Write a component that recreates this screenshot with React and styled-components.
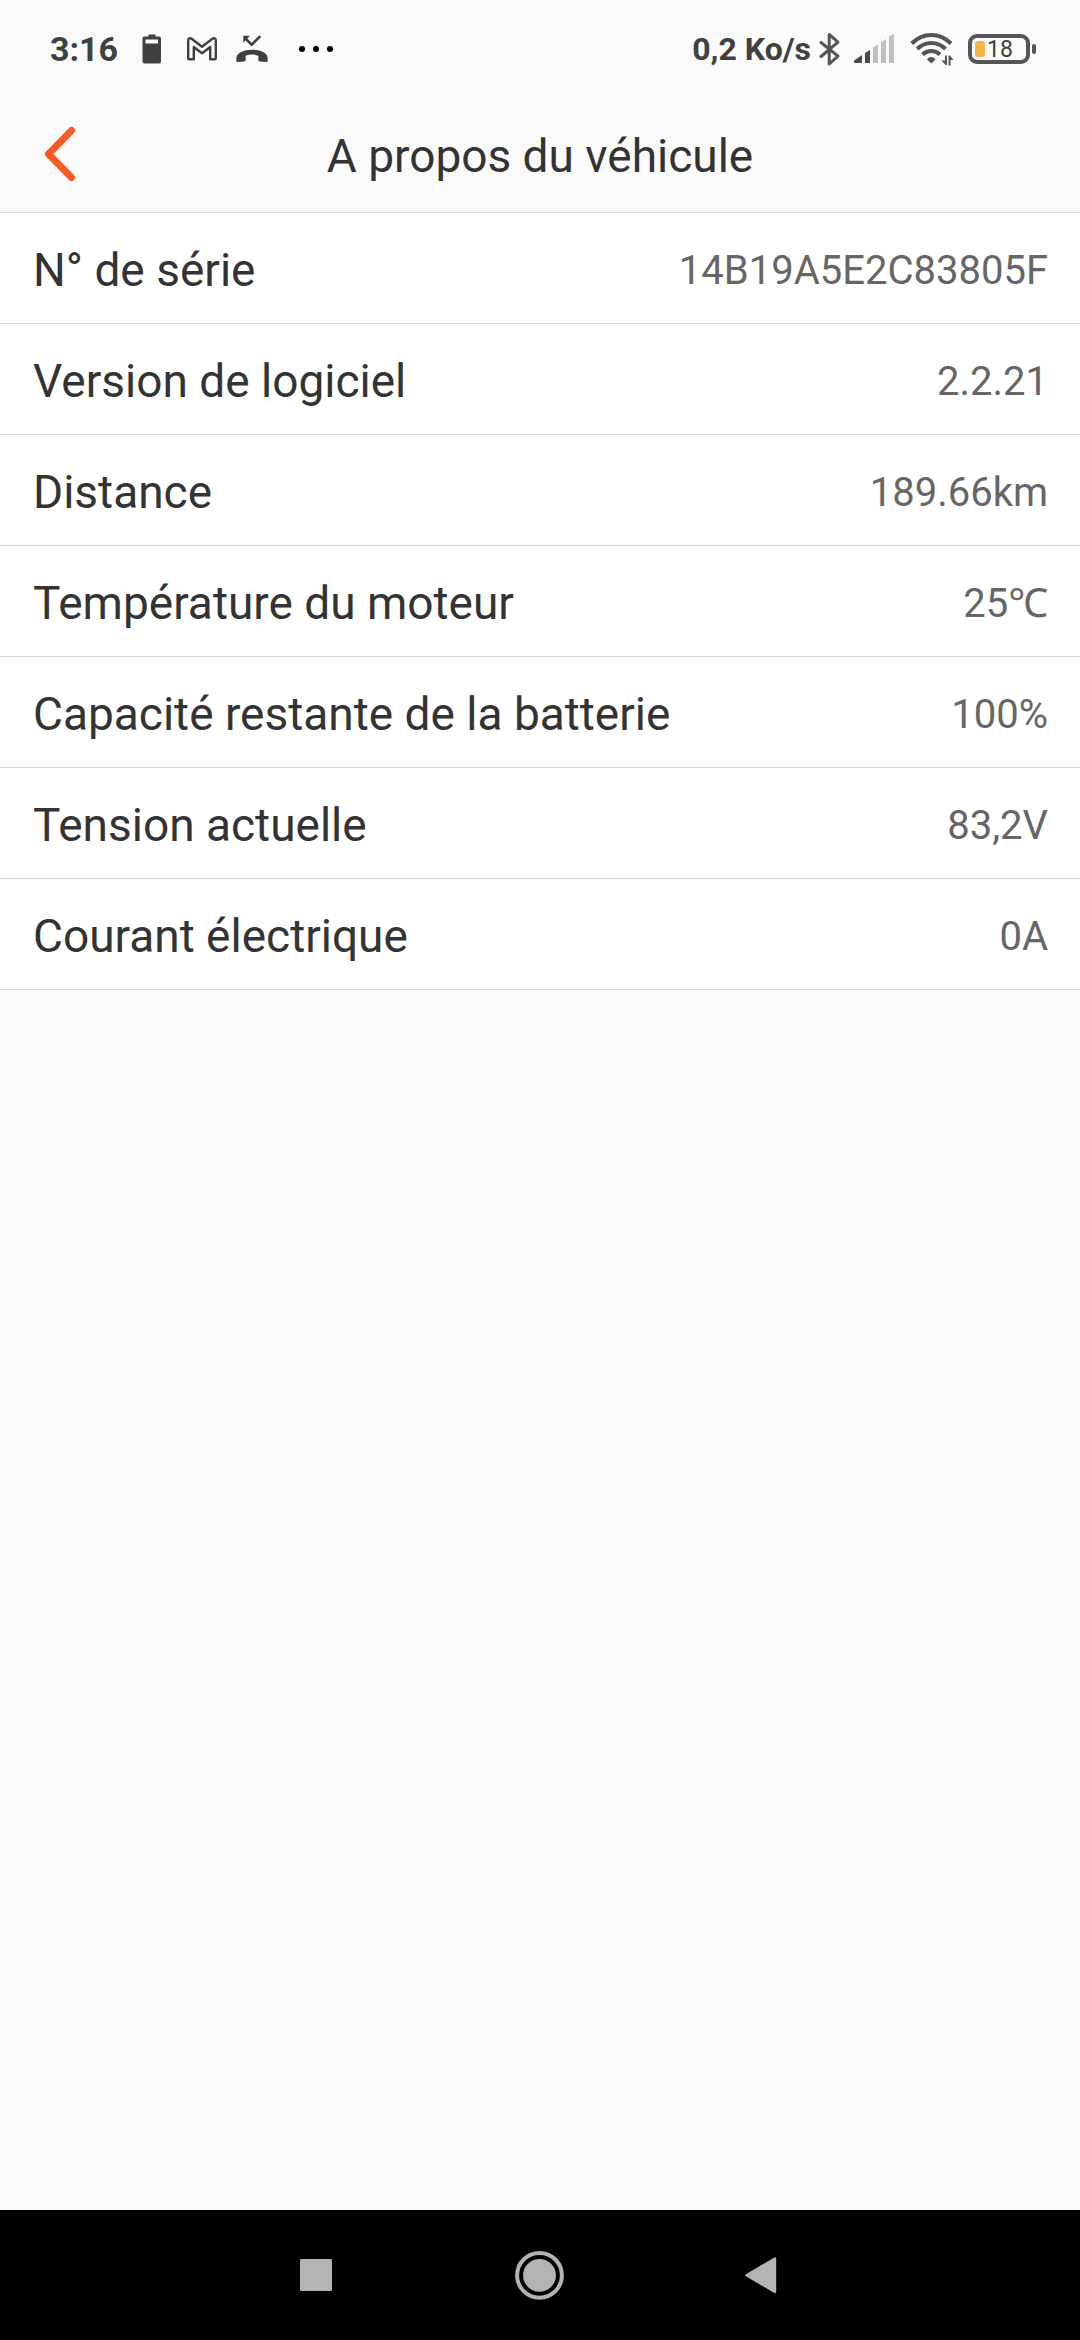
import React from "react";
import styled, { createGlobalStyle } from "styled-components";

const GlobalStyle = createGlobalStyle`
  *, *::before, *::after { box-sizing: border-box; }
  body {
    margin: 0;
    background: #f9f9f9;
    font-family: Roboto, "Noto Sans", sans-serif;
  }
`;

const Screen = styled.div`
  display: flex;
  flex-direction: column;
  min-height: 100vh;
`;

const StatusBar = styled.div`
  display: flex;
  align-items: center;
  justify-content: space-between;
  height: 100px;
  padding: 0 44px 3px 50px;
  background: #fafafa;
  color: #404040;
`;

const StatusGroup = styled.div`
  display: flex;
  align-items: center;
`;

const StatusText = styled.span`
  font-size: ${(p) => p.$size}px;
  line-height: 40px;
  font-weight: 700;
  white-space: nowrap;
`;

const Icon = styled.svg`
  display: block;
  flex: none;
  margin-left: ${(p) => p.$gap || 0}px;
  margin-bottom: ${(p) => p.$lift || 0}px;
`;

const Battery = styled.div`
  display: flex;
  align-items: center;
  margin-left: 14px;
`;

const BatteryShell = styled.div`
  display: flex;
  align-items: center;
  gap: 2px;
  width: 62px;
  height: 30px;
  padding-left: 3px;
  border: 4px solid #555;
  border-radius: 9px;
`;

const BatteryLevel = styled.div`
  width: 10px;
  height: 16px;
  border-radius: 3px;
  background: #f5b24b;
`;

const BatteryText = styled.span`
  padding-top: 2px;
  font-size: 23px;
  line-height: 22px;
`;

const BatteryTip = styled.div`
  width: 4px;
  height: 10px;
  margin-left: 2px;
  border-radius: 2px;
  background: #555;
`;

const Header = styled.header`
  display: grid;
  grid-template-columns: 120px 1fr 120px;
  align-items: center;
  height: 113px;
  border-bottom: 1px solid #d9d9d9;
  background: #fafafa;
`;

const BackButton = styled.button`
  display: flex;
  align-items: center;
  justify-content: center;
  height: 112px;
  padding: 0;
  border: 0;
  background: none;
`;

const Title = styled.h1`
  margin: 0;
  color: #333;
  font-size: 46px;
  line-height: 56px;
  font-weight: 400;
  text-align: center;
`;

const List = styled.dl`
  flex: 1;
  margin: 0;
`;

const Row = styled.div`
  display: flex;
  align-items: center;
  justify-content: space-between;
  height: 111px;
  padding: 4px 32px 0 33px;
  border-bottom: 1px solid #d9d9d9;
  background: #fff;
`;

const Label = styled.dt`
  color: #333;
  font-size: 46px;
  line-height: 56px;
`;

const Value = styled.dd`
  margin: 0;
  padding-top: 2px;
  color: #666;
  font-size: 40px;
  line-height: 56px;
`;

const NavBar = styled.nav`
  display: flex;
  justify-content: center;
  height: 130px;
  background: #000;
`;

const NavButton = styled.button`
  display: flex;
  align-items: center;
  justify-content: center;
  width: 223px;
  padding: 0;
  border: 0;
  background: none;
  color: #b3b3b3;
`;

const rows = [
  ["N° de série", "14B19A5E2C83805F"],
  ["Version de logiciel", "2.2.21"],
  ["Distance", "189.66km"],
  ["Température du moteur", "25℃"],
  ["Capacité restante de la batterie", "100%"],
  ["Tension actuelle", "83,2V"],
  ["Courant électrique", "0A"],
];

const BatteryFullIcon = () => (
  <Icon $gap={24} width="20" height="30" viewBox="0 0 20 30" aria-hidden="true">
    <path
      fill="#404040"
      fillRule="evenodd"
      d="M6.5 0.5h7v2h3.5a2 2 0 0 1 2 2v23a2 2 0 0 1-2 2H2.500a2 2 0 0 1-2-2v-23a2 2 0 0 1 2-2h4zM3.500 5.500v4h12.500v-4z"
    />
  </Icon>
);

const MailIcon = () => (
  <Icon $gap={24} width="32" height="26" viewBox="0 0 32 26" aria-hidden="true">
    <path
      fill="none"
      stroke="#404040"
      strokeWidth="2.4"
      strokeLinejoin="round"
      d="M2.200 4.200C2.200 2.200 4.200 1.700 5.600 2.800L16 10.800 26.400 2.800C27.800 1.700 29.800 2.200 29.800 4.200V22.200a1 1 0 0 1-1 1H24.200V11L16 17.200 7.800 11V23.200H3.200a1 1 0 0 1-1-1z"
    />
  </Icon>
);

const MissedCallIcon = () => (
  <Icon $gap={17} width="34" height="30" viewBox="0 0 34 30" aria-hidden="true">
    <path d="M25.300 2.200L16.700 10.700 9.800 3.800" fill="none" stroke="#404040" strokeWidth="2.600" />
    <path d="M8.300 1.800h6.700l-6.700 7z" fill="#404040" />
    <path
      fill="#404040"
      d="M1.300 24.500C1.300 18.500 9 15.700 17 15.700s15.700 2.800 15.700 8.800v2.200c0 .9-.6 1.400-1.500 1.300l-6.500-.6c-.8-.1-1.300-.6-1.300-1.400v-4.300c-4.200-1.500-8.600-1.500-12.800 0v4.300c0 .8-.5 1.300-1.300 1.400l-6.500.6c-.9.1-1.500-.4-1.500-1.300z"
    />
  </Icon>
);

const MoreIcon = () => (
  <Icon $gap={29} width="36" height="8" viewBox="0 0 36 8" aria-hidden="true">
    <circle cx="4" cy="4" r="3" />
    <circle cx="18" cy="4" r="3" />
    <circle cx="32" cy="4" r="3" />
  </Icon>
);

const BluetoothIcon = () => (
  <Icon $gap={7} width="24" height="36" viewBox="0 0 24 36" aria-hidden="true">
    <path
      fill="none"
      stroke="#555"
      strokeWidth="3"
      strokeLinecap="round"
      strokeLinejoin="round"
      d="M3 11.500L20 25.200 11.200 33V3.500L20 11.200 3 25.500"
    />
  </Icon>
);

const SignalIcon = () => (
  <Icon $gap={11} $lift={2} width="42" height="30" viewBox="0 0 42 30" aria-hidden="true">
    <path fill="#4a4a4a" d="M1 27.500L9 22V30H2a1 1 0 0 1-1-1zM12 20L17 17V30H12z" />
    <path fill="#c1c1c1" d="M20 14.500L25 11.500V30H20zM28 9L33 6V30H28zM36 3.500L41 .8V30H36z" />
  </Icon>
);

const WifiIcon = () => (
  <Icon $gap={14} width="45" height="34" viewBox="0 0 45 34" aria-hidden="true">
    <g fill="none" stroke="#555" strokeWidth="4">
      <path d="M2.700 11.500C14 .2 30.500 .2 42 11.500" />
      <path d="M8.200 17C16.500 9 28.200 9 36.500 17" />
      <path d="M13.500 22.500C18.500 17.700 26 17.700 31 22.500" />
    </g>
    <path fill="#555" d="M18 27.500c2.500-3.200 6-3.200 8.500 0L22.300 31.500z" />
    <path fill="#555" d="M36 23.500h2V33h-1.500l-4-4.500H36zM39.500 33.500v-10H41l3.500 4.500h-3v5.500z" />
  </Icon>
);

export default function App() {
  return (
    <>
      <GlobalStyle />
      <Screen>
        <StatusBar>
          <StatusGroup>
            <StatusText $size={34}>3:16</StatusText>
            <BatteryFullIcon />
            <MailIcon />
            <MissedCallIcon />
            <MoreIcon />
          </StatusGroup>
          <StatusGroup>
            <StatusText $size={32}>0,2 Ko/s</StatusText>
            <BluetoothIcon />
            <SignalIcon />
            <WifiIcon />
            <Battery>
              <BatteryShell>
                <BatteryLevel />
                <BatteryText>18</BatteryText>
              </BatteryShell>
              <BatteryTip />
            </Battery>
          </StatusGroup>
        </StatusBar>
        <Header>
          <BackButton type="button" aria-label="Retour">
            <Icon $lift={4} width="36" height="60" viewBox="0 0 36 60" aria-hidden="true">
              <path
                d="M29.500 6.500L6.500 30 29.500 53.500"
                fill="none"
                stroke="#fa5a23"
                strokeWidth="7"
                strokeLinecap="round"
                strokeLinejoin="round"
              />
            </Icon>
          </BackButton>
          <Title>A propos du véhicule</Title>
        </Header>
        <List>
          {rows.map(([label, value]) => (
            <Row key={label}>
              <Label>{label}</Label>
              <Value>{value}</Value>
            </Row>
          ))}
        </List>
        <NavBar>
          <NavButton type="button" aria-label="Applications récentes">
            <svg width="50" height="50" viewBox="0 0 50 50" aria-hidden="true">
              <rect x="8" y="9" width="32" height="32" rx="1.500" fill="currentColor" />
            </svg>
          </NavButton>
          <NavButton type="button" aria-label="Accueil">
            <svg width="50" height="50" viewBox="0 0 50 50" aria-hidden="true">
              <circle cx="24.500" cy="25.300" r="22.400" fill="none" stroke="currentColor" strokeWidth="4" />
              <circle cx="24.500" cy="25.300" r="16.400" fill="currentColor" />
            </svg>
          </NavButton>
          <NavButton type="button" aria-label="Précédent">
            <svg width="50" height="50" viewBox="0 0 50 50" aria-hidden="true">
              <path
                d="M8.500 25.300L37 8.500V42z"
                fill="currentColor"
                stroke="currentColor"
                strokeWidth="2.400"
                strokeLinejoin="round"
              />
            </svg>
          </NavButton>
        </NavBar>
      </Screen>
    </>
  );
}
